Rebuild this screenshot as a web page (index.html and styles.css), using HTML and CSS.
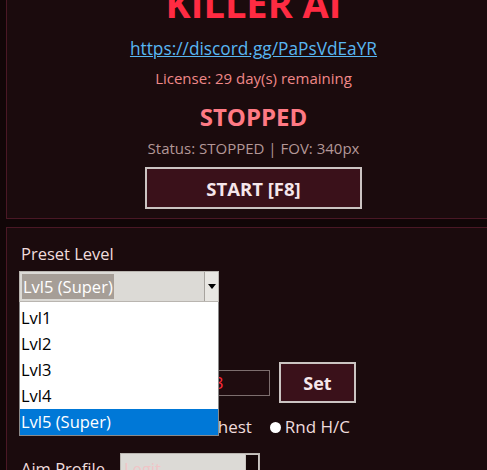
FILE: index.html
```html
<!DOCTYPE html>
<html lang="en">
<head>
<meta charset="utf-8">
<title>KILLER AI</title>
<link rel="stylesheet" href="styles.css">
</head>
<body>
<div class="app">
  <section class="panel panel-main">
    <h1 class="title">KILLER AI</h1>
    <a class="link" href="#">https://discord.gg/PaPsVdEaYR</a>
    <p class="license">License: 29 day(s) remaining</p>
    <p class="state">STOPPED</p>
    <p class="status">Status: STOPPED | FOV: 340px</p>
    <button class="btn btn-start">START [F8]</button>
  </section>

  <section class="panel panel-settings">
    <div class="field-label">Preset Level</div>
    <div class="combo combo-preset">
      <div class="combo-value"><span class="combo-sel">Lvl5 (Super)</span></div>
      <div class="combo-arrow"><span class="tri"></span></div>
      <ul class="dropdown">
        <li>Lvl1</li>
        <li>Lvl2</li>
        <li>Lvl3</li>
        <li>Lvl4</li>
        <li class="sel">Lvl5 (Super)</li>
      </ul>
    </div>

    <div class="row row-entry">
      <span class="spacer spacer-entry"></span>
      <span class="entry">3</span>
      <button class="btn btn-set">Set</button>
    </div>

    <div class="row row-radio">
      <span class="spacer spacer-radio"></span>
      <span class="radio"><span class="dot"></span>Chest</span>
      <span class="radio"><span class="dot"></span>Rnd H/C</span>
    </div>

    <div class="row row-aim">
      <span class="row-label">Aim Profile</span>
      <div class="combo combo-aim">
        <div class="combo-value"><span class="combo-text">Legit</span></div>
        <div class="combo-arrow dark"><span class="tri"></span></div>
      </div>
    </div>
  </section>
</div>
</body>
</html>
```

FILE: styles.css
```css
* { box-sizing: border-box; }
html, body { margin: 0; padding: 0; }
body {
  width: 487px;
  height: 470px;
  overflow: hidden;
  background: #110607;
  font-family: "Open Sans", "Noto Sans", sans-serif;
}
.app {
  margin-top: -30px;
  padding-left: 6px;
  width: 506px;
}
.panel {
  background: #1b0b0d;
  border: 1px solid #4a1825;
  width: 495px;
}
.panel-main {
  padding: 10px 0 9px;
  display: flex;
  flex-direction: column;
  align-items: center;
}
.title {
  margin: 0;
  font-size: 38px;
  line-height: 44px;
  font-weight: 700;
  color: #ff2b42;
}
.link {
  margin-top: 13px;
  font-size: 17.3px;
  line-height: 22px;
  color: #58b6f2;
  text-decoration: underline;
}
.license {
  margin: 8px 0 0;
  font-size: 15px;
  line-height: 20px;
  color: #f08888;
}
.state {
  margin: 15px 0 0;
  font-size: 24px;
  line-height: 28px;
  font-weight: 700;
  color: #ff7a84;
}
.status {
  margin: 7px 0 0;
  font-size: 15px;
  line-height: 20px;
  color: #b39797;
}
.btn {
  background: #3a111a;
  border: 2px solid #cbc4c2;
  color: #f5e6ea;
  font-family: inherit;
  font-weight: 700;
  padding: 0;
}
.btn-start {
  margin-top: 9px;
  width: 217px;
  height: 42px;
  font-size: 18.5px;
}

.panel-settings {
  margin-top: 8px;
  padding: 15px 0 0 12px;
  height: 300px;
}
.field-label {
  font-size: 16.5px;
  line-height: 22px;
  color: #efdcdc;
  padding-left: 2px;
}
.combo {
  position: relative;
  display: flex;
  height: 31px;
  background: #dcdad6;
  border: 1px solid #b9b5b0;
}
.combo-preset {
  width: 200px;
  margin-top: 6px;
}
.combo-value {
  flex: 1;
  padding: 2px;
  display: flex;
  font-size: 16.5px;
  line-height: 25px;
}
.combo-sel {
  background: #a69e97;
  color: #ffffff;
  padding: 0 1px;
}
.combo-text {
  color: #f0c4c6;
  padding: 0 1px;
}
.combo-arrow {
  width: 14px;
  border-left: 1px solid #a7a39e;
  background: #e8e6e2;
  display: flex;
  align-items: center;
  justify-content: center;
}
.combo-arrow.dark {
  background: #140708;
  border: 1px solid #c8c4c0;
  align-items: flex-end;
  padding-bottom: 4px;
}
.tri {
  width: 0;
  height: 0;
  border-left: 4px solid transparent;
  border-right: 4px solid transparent;
  border-top: 5px solid #000;
}
.dropdown {
  position: absolute;
  top: calc(100% + 1px);
  left: -1px;
  width: 200px;
  margin: 0;
  padding: 3px 0 0;
  list-style: none;
  background: #ffffff;
  border: 1px solid #8a8a8a;
  border-top: none;
  z-index: 2;
}
.dropdown li {
  height: 26px;
  line-height: 26px;
  padding-left: 1px;
  font-size: 16.5px;
  color: #000;
}
.dropdown li.sel {
  background: #0078d7;
  color: #fff;
}

.row {
  display: flex;
  align-items: center;
  font-size: 16.5px;
  color: #efdcdc;
}
.row-label {
  width: 101px;
  padding-left: 2px;
  flex: none;
}
.spacer { flex: none; }
.spacer-entry { width: 191px; }
.spacer-radio { width: 155px; }
.row-entry {
  margin-top: 60px;
  height: 41px;
}
.entry {
  width: 60px;
  height: 26px;
  background: #1f0c0f;
  border: 1px solid #7d6e6e;
  color: #ff2a3a;
  padding-left: 3px;
  line-height: 24px;
}
.btn-set {
  margin-left: 9px;
  width: 77px;
  height: 41px;
  font-size: 18px;
}
.row-radio {
  margin-top: 13px;
  height: 22px;
  line-height: 22px;
  gap: 18px;
  font-size: 17px;
}
.radio {
  display: flex;
  align-items: center;
}
.dot {
  width: 11px;
  height: 11px;
  border-radius: 50%;
  background: #ffffff;
  margin-right: 4px;
}
.row-aim {
  margin-top: 15px;
  align-items: flex-start;
  line-height: 31px;
}
.combo-aim {
  width: 140px;
}
```
